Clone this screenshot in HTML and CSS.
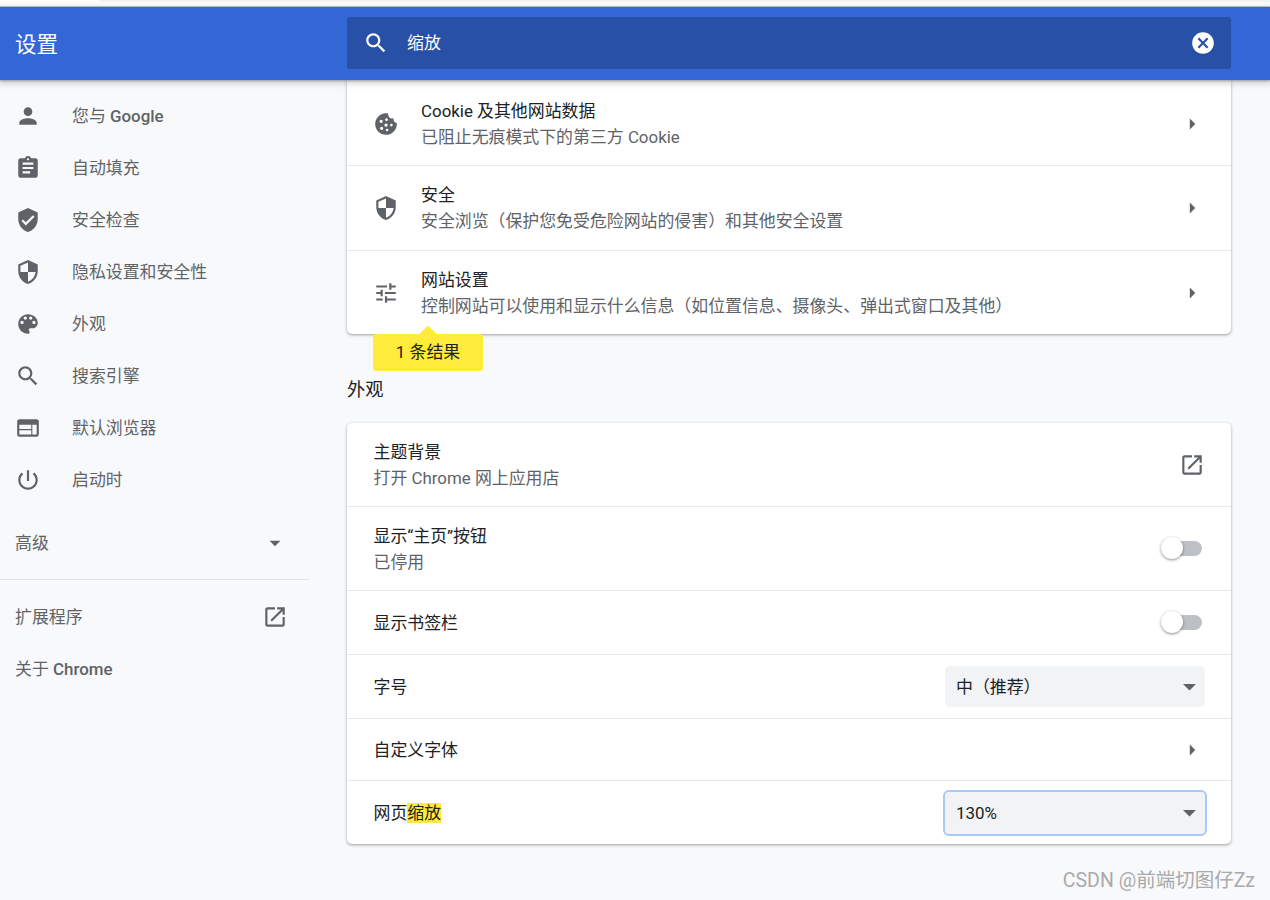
FILE: index.html
```html
<!DOCTYPE html>
<html>
<head>
	<meta charset="utf-8">
	<title>设置</title>
	<link rel="stylesheet" href="styles.css">
</head>
<body>

<svg class="icon-defs">
	<symbol id="i-person" viewBox="0 0 24 24"><path d="M12 12c2.21 0 4-1.79 4-4s-1.79-4-4-4-4 1.79-4 4 1.79 4 4 4zm0 2c-2.67 0-8 1.34-8 4v2h16v-2c0-2.66-5.33-4-8-4z"/></symbol>
	<symbol id="i-assignment" viewBox="0 0 24 24"><path d="M19 3h-4.18C14.4 1.84 13.3 1 12 1c-1.3 0-2.4.84-2.82 2H5c-1.1 0-2 .9-2 2v14c0 1.1.9 2 2 2h14c1.1 0 2-.9 2-2V5c0-1.1-.9-2-2-2zm-7 0c.55 0 1 .45 1 1s-.45 1-1 1-1-.45-1-1 .45-1 1-1zm2 14H7v-2h7v2zm3-4H7v-2h10v2zm0-4H7V7h10v2z"/></symbol>
	<symbol id="i-verified" viewBox="0 0 24 24"><path d="M12 1L3 5v6c0 5.55 3.84 10.74 9 12 5.16-1.26 9-6.45 9-12V5l-9-4zm-2 16l-4-4 1.41-1.41L10 14.17l6.59-6.59L18 9l-8 8z"/></symbol>
	<symbol id="i-security" viewBox="0 0 24 24"><path d="M12 1L3 5v6c0 5.55 3.84 10.74 9 12 5.16-1.26 9-6.45 9-12V5l-9-4zm0 10.99h7c-.53 4.12-3.28 7.79-7 8.94V12H5V6.3l7-3.11v8.8z"/></symbol>
	<symbol id="i-palette" viewBox="0 0 24 24"><path d="M12 3c-4.97 0-9 4.03-9 9s4.03 9 9 9c.83 0 1.5-.67 1.5-1.5 0-.39-.15-.74-.39-1.01-.23-.26-.38-.61-.38-.99 0-.83.67-1.5 1.5-1.5H16c2.76 0 5-2.24 5-5 0-4.42-4.03-8-9-8zm-5.5 9c-.83 0-1.5-.67-1.5-1.5S5.67 9 6.5 9 8 9.67 8 10.5 7.33 12 6.5 12zm3-4C8.67 8 8 7.33 8 6.5S8.67 5 9.5 5s1.5.67 1.5 1.5S10.33 8 9.5 8zm5 0c-.83 0-1.5-.67-1.5-1.5S13.67 5 14.5 5s1.5.67 1.5 1.5S15.33 8 14.5 8zm3 4c-.83 0-1.5-.67-1.5-1.5S16.67 9 17.5 9s1.5.67 1.5 1.5-.67 1.5-1.5 1.5z"/></symbol>
	<symbol id="i-search" viewBox="0 0 24 24"><path d="M15.5 14h-.79l-.28-.27C15.41 12.59 16 11.11 16 9.5 16 5.91 13.09 3 9.5 3S3 5.91 3 9.5 5.91 16 9.5 16c1.61 0 3.09-.59 4.23-1.57l.27.28v.79l5 4.99L20.49 19l-4.99-5zm-6 0C7.01 14 5 11.99 5 9.5S7.01 5 9.5 5 14 7.01 14 9.5 11.99 14 9.5 14z"/></symbol>
	<symbol id="i-web" viewBox="0 0 24 24"><path d="M20 4H4c-1.1 0-1.99.9-1.99 2L2 18c0 1.1.9 2 2 2h16c1.1 0 2-.9 2-2V6c0-1.1-.9-2-2-2zm-5 14H4v-4h11v4zm0-5H4V9h11v4zm5 5h-4V9h4v9z"/></symbol>
	<symbol id="i-power" viewBox="0 0 24 24"><path d="M13 3h-2v10h2V3zm4.83 2.17l-1.42 1.42C17.99 7.86 19 9.81 19 12c0 3.87-3.13 7-7 7s-7-3.13-7-7c0-2.19 1.01-4.14 2.58-5.42L6.17 5.17C4.23 6.82 3 9.26 3 12c0 4.97 4.03 9 9 9s9-4.03 9-9c0-2.74-1.23-5.18-3.17-6.83z"/></symbol>
	<symbol id="i-open" viewBox="0 0 24 24"><path d="M19 19H5V5h7V3H5c-1.11 0-2 .9-2 2v14c0 1.1.89 2 2 2h14c1.1 0 2-.9 2-2v-7h-2v7zM14 3v2h3.59l-9.83 9.83 1.41 1.41L19 6.41V10h2V3h-7z"/></symbol>
	<symbol id="i-tune" viewBox="0 0 24 24"><path d="M3 17v2h6v-2H3zM3 5v2h10V5H3zm10 16v-2h8v-2h-8v-2h-2v6h2zM7 9v2H3v2h4v2h2V9H7zm14 4v-2H11v2h10zm-6-4h2V7h4V5h-4V3h-2v6z"/></symbol>
	<symbol id="i-cookie" viewBox="0 0 24 24"><path fill-rule="evenodd" d="M21.95 10.99c-1.79-.03-3.7-1.95-2.68-4.22-2.97 1-5.78-1.59-5.19-4.56C7.11.74 2 6.41 2 12c0 5.52 4.48 10 10 10 5.89 0 10.54-5.08 9.95-11.01zM7.5 11a1.5 1.5 0 1 0 0-3 1.5 1.5 0 0 0 0 3zm5-1.8a1.2 1.2 0 1 0 0-2.4 1.2 1.2 0 0 0 0 2.4zm-.5 5.3a1.5 1.5 0 1 0 0-3 1.5 1.5 0 0 0 0 3zm5-.3a1.2 1.2 0 1 0 0-2.4 1.2 1.2 0 0 0 0 2.4zm-9 3.3a1.5 1.5 0 1 0 0-3 1.5 1.5 0 0 0 0 3zm5 1.2a1.2 1.2 0 1 0 0-2.4 1.2 1.2 0 0 0 0 2.4z"/></symbol>
	<symbol id="i-cancel" viewBox="0 0 24 24"><path d="M12 2C6.47 2 2 6.47 2 12s4.47 10 10 10 10-4.47 10-10S17.53 2 12 2zm5 13.59L15.59 17 12 13.41 8.41 17 7 15.59 10.59 12 7 8.41 8.41 7 12 10.59 15.59 7 17 8.41 13.41 12 17 15.59z"/></symbol>
	<symbol id="i-right" viewBox="0 0 24 24"><path d="M10 17l5-5-5-5v10z"/></symbol>
	<symbol id="i-down" viewBox="0 0 24 24"><path d="M7 10l5 5 5-5z"/></symbol>
</svg>

<div class="top-strip"></div>

<header class="toolbar">
	<div class="toolbar-title">设置</div>
	<div class="search">
		<svg class="icon"><use href="#i-search"/></svg>
		<span class="search-text">缩放</span>
		<svg class="icon"><use href="#i-cancel"/></svg>
	</div>
</header>

<div class="page">
	<nav class="sidebar">
		<a class="nav-item"><svg class="icon"><use href="#i-person"/></svg><span>您与 <b>Google</b></span></a>
		<a class="nav-item"><svg class="icon"><use href="#i-assignment"/></svg><span>自动填充</span></a>
		<a class="nav-item"><svg class="icon"><use href="#i-verified"/></svg><span>安全检查</span></a>
		<a class="nav-item"><svg class="icon"><use href="#i-security"/></svg><span>隐私设置和安全性</span></a>
		<a class="nav-item"><svg class="icon"><use href="#i-palette"/></svg><span>外观</span></a>
		<a class="nav-item"><svg class="icon"><use href="#i-search"/></svg><span>搜索引擎</span></a>
		<a class="nav-item"><svg class="icon"><use href="#i-web"/></svg><span>默认浏览器</span></a>
		<a class="nav-item"><svg class="icon"><use href="#i-power"/></svg><span>启动时</span></a>
		<a class="nav-plain nav-advanced"><span>高级</span><svg class="icon"><use href="#i-down"/></svg></a>
		<a class="nav-plain nav-extensions"><span>扩展程序</span><svg class="icon"><use href="#i-open"/></svg></a>
		<a class="nav-plain"><span>关于 <b>Chrome</b></span></a>
	</nav>

	<main class="content">
		<section class="card card-first">
			<div class="row row-lead">
				<svg class="icon row-icon"><use href="#i-cookie"/></svg>
				<div class="row-text">
					<div class="row-title">Cookie 及其他网站数据</div>
					<div class="row-sub">已阻止无痕模式下的第三方 Cookie</div>
				</div>
				<svg class="icon"><use href="#i-right"/></svg>
			</div>
			<div class="row row-tall">
				<svg class="icon row-icon"><use href="#i-security"/></svg>
				<div class="row-text">
					<div class="row-title">安全</div>
					<div class="row-sub">安全浏览（保护您免受危险网站的侵害）和其他安全设置</div>
				</div>
				<svg class="icon"><use href="#i-right"/></svg>
			</div>
			<div class="row row-theme">
				<svg class="icon row-icon"><use href="#i-tune"/></svg>
				<div class="row-text">
					<div class="row-title">网站设置</div>
					<div class="row-sub">控制网站可以使用和显示什么信息（如位置信息、摄像头、弹出式窗口及其他）</div>
				</div>
				<svg class="icon"><use href="#i-right"/></svg>
			</div>
			<div class="result-bubble">1 条结果</div>
		</section>

		<h2 class="section-title">外观</h2>

		<section class="card">
			<div class="row row-theme">
				<div class="row-text">
					<div class="row-title">主题背景</div>
					<div class="row-sub">打开 Chrome 网上应用店</div>
				</div>
				<svg class="icon"><use href="#i-open"/></svg>
			</div>
			<div class="row row-theme">
				<div class="row-text">
					<div class="row-title">显示“主页”按钮</div>
					<div class="row-sub">已停用</div>
				</div>
				<div class="toggle"></div>
			</div>
			<div class="row row-toggle">
				<div class="row-text"><div class="row-title">显示书签栏</div></div>
				<div class="toggle"></div>
			</div>
			<div class="row row-select">
				<div class="row-text"><div class="row-title">字号</div></div>
				<div class="select"><span>中（推荐）</span><svg class="icon select-arrow"><use href="#i-down"/></svg></div>
			</div>
			<div class="row row-link">
				<div class="row-text"><div class="row-title">自定义字体</div></div>
				<svg class="icon"><use href="#i-right"/></svg>
			</div>
			<div class="row row-select">
				<div class="row-text"><div class="row-title">网页<mark>缩放</mark></div></div>
				<div class="select select-focus"><span>130%</span><svg class="icon select-arrow"><use href="#i-down"/></svg></div>
			</div>
		</section>
	</main>
</div>

<div class="watermark">CSDN @前端切图仔Zz</div>

</body>
</html>
```

FILE: styles.css
```css
* {
	box-sizing: border-box;
}

html, body {
	margin: 0;
	height: 900px;
	overflow: hidden;
}

body {
	background-color: #f8f9fa;
	color: #202124;
	font-family: Roboto, "Noto Sans CJK SC", sans-serif;
	font-size: 16.9px;
	line-height: 26px;
}

.icon-defs {
	display: none;
}

.icon {
	width: 26px;
	height: 26px;
	flex: none;
	fill: #5f6368;
}

.top-strip {
	position: relative;
	height: 7px;
	background-color: #fff;
	border-bottom: 1px solid #c8cacd;
}

.top-strip::before {
	content: "";
	position: absolute;
	left: 100px;
	right: 0;
	top: 0;
	height: 2px;
	background-color: #f1f3f4;
}

.toolbar {
	position: relative;
	z-index: 2;
	display: flex;
	align-items: center;
	height: 73px;
	padding-right: 39px;
	background-color: #3367d6;
	box-shadow: 0 1px 2px rgba(60, 64, 67, 0.4), 0 2px 6px 2px rgba(60, 64, 67, 0.2);
}

.toolbar-title {
	width: 347px;
	padding-top: 2px;
	padding-left: 15px;
	color: #fff;
	font-size: 21.5px;
}

.search {
	display: flex;
	align-items: center;
	flex: 1;
	height: 52px;
	margin-bottom: 1px;
	padding: 0 15px 0 16px;
	border-radius: 3px;
	background-color: #2850a7;
	color: #fff;
}

.search .icon {
	fill: #fff;
}

.search-text {
	flex: 1;
	padding-left: 18px;
}

.page {
	display: flex;
	height: 820px;
}

.sidebar {
	width: 309px;
	padding-top: 10px;
	flex: none;
	color: #5f6368;
}

.sidebar b {
	font-weight: 500;
}

.nav-item {
	display: flex;
	align-items: center;
	height: 52px;
	padding-left: 15px;
	gap: 31px;
}

.nav-plain {
	display: flex;
	align-items: center;
	justify-content: space-between;
	height: 52px;
	padding: 0 21px 0 15px;
}

.nav-advanced {
	height: 53px;
	margin-top: 11px;
	padding-bottom: 1px;
}

.nav-extensions {
	height: 64px;
	margin-top: 9px;
	padding-top: 11px;
	border-top: 1px solid #e0e2e5;
}

.content {
	width: 884px;
	margin-left: 38px;
}

.card {
	border-radius: 5px;
	background-color: #fff;
	box-shadow: 0 1px 2px rgba(60, 64, 67, 0.3), 0 1px 3px 1px rgba(60, 64, 67, 0.15);
}

.card-first {
	position: relative;
	border-radius: 0 0 5px 5px;
}

.row {
	display: flex;
	align-items: center;
	padding: 0 26px 0 26.5px;
	border-top: 1px solid #e8eaed;
}

.row:first-child {
	border-top: 0;
}

.row-lead {
	height: 85px;
	padding-top: 3px;
}

.row-tall {
	height: 85px;
}

.row-theme {
	height: 84px;
}

.row-theme:first-child {
	height: 83px;
}

.row-toggle,
.row-select {
	height: 64px;
}

.row-link {
	height: 62px;
}

.row-text {
	flex: 1;
}

.row-icon {
	margin-left: -0.5px;
	margin-right: 22px;
}

.row-sub {
	color: #5f6368;
}

mark {
	background-color: #ffeb3b;
	color: inherit;
}

.toggle {
	position: relative;
	width: 37px;
	height: 15px;
	margin-right: 3px;
	border-radius: 8px;
	background-color: #bdc1c6;
}

.toggle::before {
	content: "";
	position: absolute;
	left: -4px;
	top: -4px;
	width: 22px;
	height: 22px;
	border-radius: 50%;
	background-color: #fff;
	box-shadow: 0 1px 3px rgba(0, 0, 0, 0.45);
}

.select {
	display: flex;
	align-items: center;
	justify-content: space-between;
	width: 260px;
	height: 41px;
	padding-left: 11px;
	border-radius: 5px;
	background-color: #f1f3f4;
}

.select-arrow {
	width: 31px;
	height: 31px;
}

.select-focus {
	width: 264px;
	height: 46px;
	margin-right: -2px;
	border: 2px solid #a8c9fb;
	border-radius: 6px;
}

.result-bubble {
	position: absolute;
	left: 26px;
	top: 254px;
	width: 110px;
	height: 37px;
	border-radius: 3px;
	background-color: #ffeb3b;
	text-align: center;
	line-height: 37px;
}

.result-bubble::before {
	content: "";
	position: absolute;
	left: 49px;
	top: -6px;
	width: 12px;
	height: 12px;
	background-color: #ffeb3b;
	transform: rotate(45deg);
}

.section-title {
	margin: 0;
	height: 89px;
	padding-top: 43px;
	font-size: 18.2px;
	font-weight: 400;
	line-height: 26px;
}

.watermark {
	position: absolute;
	right: 15px;
	bottom: 6px;
	color: #a9aaab;
	font-size: 19.5px;
	line-height: 26px;
}
```
